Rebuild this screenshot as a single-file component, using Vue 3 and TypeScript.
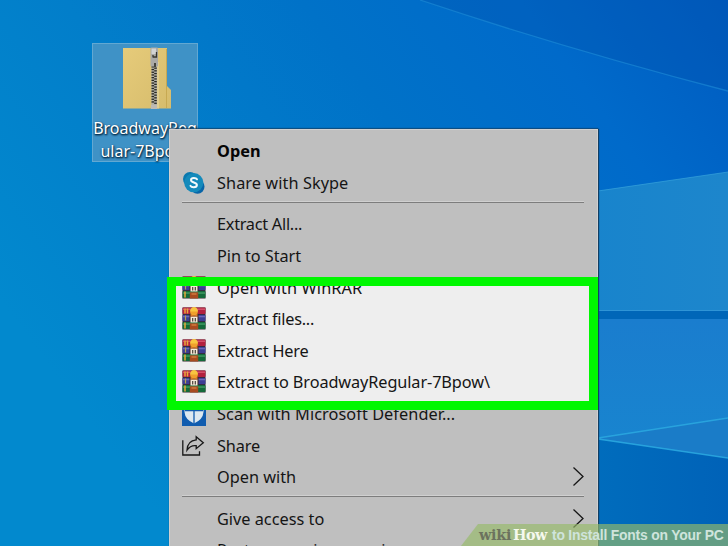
<script setup lang="ts">
type IconName = 'skype' | 'rar' | 'shield' | 'share'

interface MenuEntry {
  label?: string
  icon?: IconName
  bold?: boolean
  submenu?: boolean
  separator?: boolean
  tracking?: number
}

const entries: MenuEntry[] = [
  { label: 'Open', bold: true },
  { label: 'Share with Skype', icon: 'skype', tracking: 0.07 },
  { separator: true },
  { label: 'Extract All...', tracking: -0.27 },
  { label: 'Pin to Start', tracking: -0.07 },
  { label: 'Open with WinRAR', icon: 'rar', tracking: 0.12 },
  { label: 'Extract files...', icon: 'rar', tracking: -0.25 },
  { label: 'Extract Here', icon: 'rar', tracking: -0.2 },
  { label: 'Extract to BroadwayRegular-7Bpow\\', icon: 'rar', tracking: -0.1 },
  { label: 'Scan with Microsoft Defender...', icon: 'shield', tracking: 0.07 },
  { label: 'Share', icon: 'share', tracking: -0.15 },
  { label: 'Open with', submenu: true },
  { separator: true },
  { label: 'Give access to', submenu: true },
  { label: 'Restore previous versions' },
]

const teeth = Array.from({ length: 15 }, (_, i) => 19.5 + i * 2.7)
</script>

<template>
  <main class="desktop">
    <svg class="wallpaper" viewBox="0 0 728 546" preserveAspectRatio="none" aria-hidden="true">
      <defs>
        <linearGradient id="sky" x1="0" y1="0.55" x2="1" y2="0">
          <stop offset="0" stop-color="#0289ce" />
          <stop offset="0.3" stop-color="#027eca" />
          <stop offset="0.55" stop-color="#0072c8" />
          <stop offset="0.78" stop-color="#006aca" />
          <stop offset="1" stop-color="#005bc0" />
        </linearGradient>
        <linearGradient id="beam" x1="0" y1="0" x2="1" y2="0">
          <stop offset="0" stop-color="#1884cc" />
          <stop offset="1" stop-color="#1d86cc" />
        </linearGradient>
        <linearGradient id="beam2" x1="0" y1="0" x2="0" y2="1">
          <stop offset="0" stop-color="#1a7dce" />
          <stop offset="1" stop-color="#178bd0" />
        </linearGradient>
        <linearGradient id="floor" x1="0" y1="0" x2="1" y2="0">
          <stop offset="0" stop-color="#006dbd" />
          <stop offset="1" stop-color="#0062b8" />
        </linearGradient>
      </defs>
      <rect width="728" height="546" fill="url(#sky)" />
      <path d="M420 0Q570 50 728 91V0Z" fill="#0050a8" opacity=".3" />
      <path d="M420 0Q570 50 728 91" fill="none" stroke="#2495dc" stroke-width="1.3" opacity=".5" />
      <path d="M590 192 728 172V312H590Z" fill="url(#beam)" />
      <path d="M598 191 728 172" stroke="#37a3dc" opacity=".7" />
      <path d="M590 310.500H728" stroke="#2f94d6" />
      <rect x="590" y="311" width="138" height="8" fill="#0066b8" />
      <rect x="590" y="319" width="138" height="227" fill="url(#beam2)" />
      <path d="M590 438 728 458V546H590Z" fill="url(#floor)" />
      <path d="M598 438 728 418V458Z" fill="#1a7cc8" />
      <path d="M598 438 728 418M598 439 728 458" fill="none" stroke="#2ba9e0" stroke-width="1.3" opacity=".85" />
    </svg>

    <section class="file">
      <svg class="folder" viewBox="0 0 54 68">
        <defs>
          <linearGradient id="paper" x1="0" y1="0" x2="1" y2="1">
            <stop offset="0" stop-color="#e6cb7a" />
            <stop offset="1" stop-color="#d6bc6c" />
          </linearGradient>
        </defs>
        <path d="M3 4H47V42L51 46V64.500H3Z" fill="url(#paper)" />
        <path d="M46.500 5V64" stroke="#c7a952" />
        <path d="M35 18H39V64.500H35Z" fill="#e0cd90" />
        <path d="M31.500 18H37V64.500H31.500Z" fill="#b3b1a9" />
        <g v-for="y in teeth" :key="y">
          <rect x="31.500" :y="y" width="2.600" height="1.300" fill="#29271f" />
          <rect x="34.200" :y="y + 1.3" width="2.600" height="1.300" fill="#29271f" />
        </g>
        <rect x="30.500" y="3.500" width="7.500" height="19" rx="1" fill="#aaa9a6" />
        <path d="M31.500 4.500H36V10H31.500Z" fill="#d2d3d3" />
        <path d="M36.500 8V13H33M33 11V13.500" fill="none" stroke="#37362f" stroke-width="1.300" />
        <path d="M35 19V23" stroke="#45443d" stroke-width="2" />
        <path d="M31 61H37V65H31Z" fill="#bdbab4" />
      </svg>
      <p class="file-name"><span>BroadwayReg</span><span class="second">ular-7Bpow</span></p>
    </section>

    <nav class="menu">
      <div class="lit"></div>
      <ul class="entries">
        <li v-for="(entry, i) in entries" :key="i" :class="entry.separator ? 'separator' : 'entry'">
          <template v-if="!entry.separator">
            <span class="slot">
              <svg v-if="entry.icon === 'skype'" viewBox="0 0 24 24">
                <circle cx="8" cy="8" r="7" fill="#0a78ae" />
                <circle cx="15.500" cy="15.700" r="7" fill="#0865a8" />
                <circle cx="11.800" cy="11.700" r="9.600" fill="#148abb" />
                <path d="M15 8.300C14.200 6.900 9.200 6.300 9 9 8.800 12 15.100 10.900 14.900 14.100 14.700 17 9.400 16.600 8.500 14.900" fill="none" stroke="#f3fafc" stroke-width="2" stroke-linecap="round" />
              </svg>
              <svg v-else-if="entry.icon === 'rar'" viewBox="0 0 24 24">
                <rect x=".5" y=".5" width="23" height="22" fill="#33262c" />
                <rect x=".5" y=".5" width="23" height="6.500" rx="1" fill="#b3213f" />
                <rect x="1" y="1.500" width="22" height="1.500" fill="#d2506a" />
                <rect x=".5" y="7.800" width="23" height="6.500" rx="1" fill="#3d3d94" />
                <rect x="1" y="8.800" width="22" height="1.500" fill="#6a69b8" />
                <rect x=".5" y="15.100" width="23" height="7" rx="1" fill="#146a3a" />
                <rect x="1" y="16.300" width="22" height="1.500" fill="#3f9a62" />
                <path d="M3 1.500V6.500M5.500 1.500V6.500M3 15.500V21.500" stroke="#e9a83a" stroke-width="1.500" />
                <path d="M3.500 8.500V13.500" stroke="#b5a552" stroke-width="1.200" />
                <path d="M7.500 14.500V7.500L9 5.500H15L16.500 7.500V14.500Z" fill="#3a2925" />
                <path d="M8.500 9.500H15.500V15.500H8.500Z" fill="#f7ead9" />
                <path d="M10.700 11V14.500M13.300 11V14.500" stroke="#484038" stroke-width="1.200" />
                <circle cx="12" cy="5" r="3.800" fill="#f0a02b" />
                <path d="M8 4.500Q8.500 0 12 0T16 4.500Z" fill="#f8c540" />
                <path d="M8.500 7 12 9 15.500 7V9.500H8.500Z" fill="#dc762a" />
                <path d="M7.800 16.300H16.200V22.500H7.800Z" fill="#a84b20" />
                <path d="M9.500 18H14.500" stroke="#dc8643" stroke-width="1.200" />
              </svg>
              <svg v-else-if="entry.icon === 'shield'" viewBox="0 0 24 24">
                <rect x="0" y="0" width="24" height="24" fill="#105caf" />
                <path d="M12 2Q8 5 2.500 5V10Q3 17.500 12 21.500 21 17.500 21.500 10V5Q16 5 12 2Z" fill="#dce8f0" />
                <path d="M12 2V22M3 8.500H21" stroke="#105caf" stroke-width="1.300" />
              </svg>
              <svg v-else-if="entry.icon === 'share'" viewBox="0 0 24 24" fill="none" stroke="#171717" stroke-width="1.300">
                <path d="M.8 6.200V21H17.500V17.200" />
                <path d="M14.200 2.700 21.300 8.700 14.200 14.700V11.700Q8.500 11 5 16.200 5.500 6.700 14.200 5.900Z" />
              </svg>
            </span>
            <span class="label" :class="{ bold: entry.bold }" :style="{ letterSpacing: `${entry.tracking ?? 0}px` }">{{ entry.label }}</span>
            <svg v-if="entry.submenu" class="chevron" viewBox="0 0 12 20">
              <path d="M1.500 .5 11 9.500 1.500 18.500" fill="none" stroke="#161616" stroke-width="1.300" />
            </svg>
          </template>
        </li>
      </ul>
    </nav>
    <div class="frame"></div>

    <footer class="caption"><span class="wiki">wiki</span><span class="how">How</span><span class="title">to Install Fonts on Your PC</span></footer>
  </main>
</template>

<style>
body {
  margin: 0;
  overflow: hidden;
}
</style>

<style scoped>
.desktop {
  position: relative;
  width: 728px;
  height: 546px;
  overflow: hidden;
  font-family: "Noto Sans", "Open Sans", sans-serif;
}
.wallpaper {
  position: absolute;
  inset: 0;
  width: 728px;
  height: 546px;
}
.file {
  position: absolute;
  left: 92px;
  top: 43px;
  box-sizing: border-box;
  width: 106px;
  height: 119px;
  border: 1px solid #62a8d2;
  background: #3f92c6;
}
.folder {
  display: block;
  width: 54px;
  height: 68px;
  margin-left: 27px;
}
.file-name {
  display: flex;
  flex-direction: column;
  margin: 5px 0 0;
  align-items: center;
  color: #fff;
  font-size: 16px;
  line-height: 23px;
  white-space: nowrap;
  text-shadow: 1px 1px 2px #002743, 0 1px 2px #002743;
}
.second {
  margin-right: 3px;
}
.menu {
  position: absolute;
  left: 169px;
  top: 129px;
  box-sizing: border-box;
  width: 429px;
  height: 440px;
  border: 1px solid #d0d0d0;
  background: #bfbfbf;
  box-shadow: 1px 0 1px #123e62, 0 -1px 1px rgba(18, 62, 98, 0.6);
}
.lit {
  position: absolute;
  left: 2px;
  top: 152px;
  width: 422px;
  height: 124px;
  background: #eee;
}
.entries {
  position: relative;
  margin: 0;
  padding: 5.500px 13px 0 12px;
  list-style: none;
}
.entry {
  display: flex;
  align-items: center;
  height: 31.600px;
}
.slot {
  display: flex;
  width: 24px;
  height: 24px;
  margin-right: 11px;
}
.slot svg {
  width: 24px;
  height: 24px;
}
.label {
  color: #151515;
  font-size: 16.300px;
  line-height: 24px;
  white-space: nowrap;
}
.bold {
  color: #050505;
  font-weight: 700;
}
.chevron {
  width: 12px;
  height: 20px;
  margin-left: auto;
}
.separator {
  box-sizing: border-box;
  height: 9.900px;
  padding-top: 3px;
}
.separator::before {
  display: block;
  height: 1px;
  background: #7d7d7d;
  box-shadow: 0 -1px #d0d0d0;
  content: "";
}
.frame {
  position: absolute;
  left: 167px;
  top: 277px;
  box-sizing: border-box;
  width: 431px;
  height: 133px;
  border: 9px solid #00f700;
}
.caption {
  position: absolute;
  right: 0;
  bottom: 0;
  display: flex;
  box-sizing: border-box;
  align-items: center;
  width: 267px;
  height: 22px;
  padding-left: 18px;
  background: rgba(150, 186, 104, 0.66);
  clip-path: polygon(17px 0, 100% 0, 100% 100%, 0 100%);
  font-family: "Liberation Sans", Arial, sans-serif;
  font-size: 13.900px;
  font-weight: 700;
  white-space: nowrap;
}
.wiki,
.how {
  font-family: "DejaVu Serif", serif;
  font-size: 14.300px;
}
.wiki {
  width: 34px;
  color: #6c725e;
  letter-spacing: -0.200px;
}
.how {
  width: 34px;
  color: #f5f8ed;
  letter-spacing: -0.500px;
}
.title {
  margin-left: 5px;
  color: #cfe4dc;
  letter-spacing: -0.200px;
}
</style>
